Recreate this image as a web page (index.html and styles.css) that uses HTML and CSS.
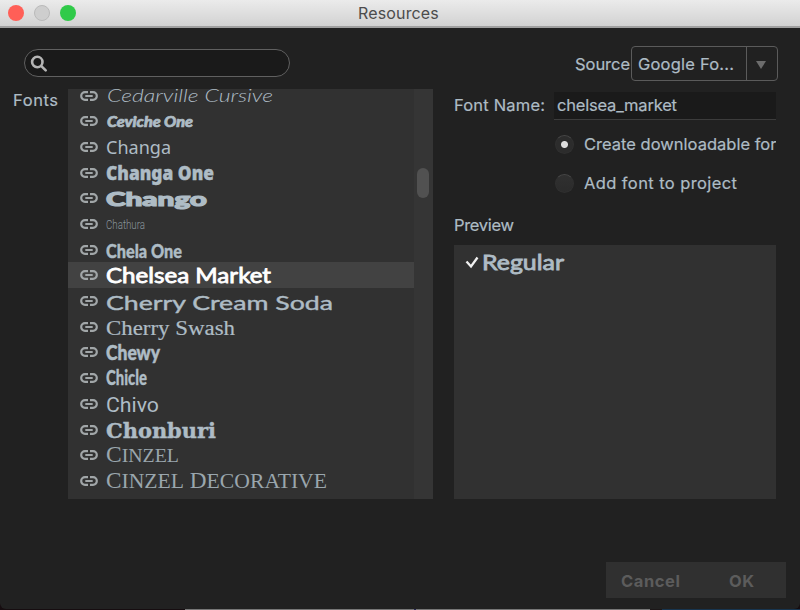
FILE: index.html
```html
<!DOCTYPE html>
<html lang="en">
<head>
<meta charset="utf-8">
<title>Resources</title>
<link rel="stylesheet" href="styles.css">
</head>
<body>
<svg class="defs" aria-hidden="true"><symbol id="link" viewBox="0 0 18 10"><path d="M8 1.2H5a3.8 3.8 0 0 0 0 7.6H8M10 1.2h3a3.8 3.8 0 0 1 0 7.6H10M5.3 5h7.4" fill="none" stroke="currentColor" stroke-width="2.2"/></symbol></svg>
<div class="window">
  <header class="titlebar"><i class="light red"></i><i class="light grey"></i><i class="light green"></i><h1>Resources</h1></header>
  <main class="content">
    <section class="browser">
      <div class="search"><svg width="18" height="18" viewBox="0 0 18 18"><circle cx="7.3" cy="7" r="5.2"/><path d="M11.1 10.8l4.6 4.6"/></svg></div>
      <div class="fonts">
        <label class="caption"><svg width="46" height="22"><text x="0" y="17" textLength="45">Fonts</text></svg></label>
        <div class="list">
          <ul class="rows">
            <li><svg class="link"><use href="#link"/></svg><svg class="name"><text class="cedar" x="1" y="19" textLength="166" lengthAdjust="spacingAndGlyphs">Cedarville Cursive</text></svg></li>
            <li><svg class="link"><use href="#link"/></svg><svg class="name"><text class="ceviche" x="1" y="18.6" textLength="86" lengthAdjust="spacingAndGlyphs">Ceviche One</text></svg></li>
            <li><svg class="link"><use href="#link"/></svg><svg class="name"><text class="changa" x="0" y="19.5" textLength="65" lengthAdjust="spacingAndGlyphs">Changa</text></svg></li>
            <li><svg class="link"><use href="#link"/></svg><svg class="name"><text class="changa-one" x="0" y="20.3" textLength="108" lengthAdjust="spacingAndGlyphs">Changa One</text></svg></li>
            <li><svg class="link"><use href="#link"/></svg><svg class="name"><text class="chango" x="0" y="20.6" textLength="101" lengthAdjust="spacingAndGlyphs">Chango</text></svg></li>
            <li><svg class="link"><use href="#link"/></svg><svg class="name"><text class="chathura" x="0" y="18.4" textLength="39" lengthAdjust="spacingAndGlyphs">Chathura</text></svg></li>
            <li><svg class="link"><use href="#link"/></svg><svg class="name"><text class="chela" x="0" y="20.6" textLength="76" lengthAdjust="spacingAndGlyphs">Chela One</text></svg></li>
            <li class="selected"><svg class="link"><use href="#link"/></svg><svg class="name"><text class="chelsea" x="0" y="20.6" textLength="165" lengthAdjust="spacingAndGlyphs">Chelsea Market</text></svg></li>
            <li><svg class="link"><use href="#link"/></svg><svg class="name"><text class="cream" x="0" y="21.6" textLength="227" lengthAdjust="spacingAndGlyphs">Cherry Cream Soda</text></svg></li>
            <li><svg class="link"><use href="#link"/></svg><svg class="name"><text class="swash" x="0" y="20.6" textLength="129" lengthAdjust="spacingAndGlyphs">Cherry Swash</text></svg></li>
            <li><svg class="link"><use href="#link"/></svg><svg class="name"><text class="chewy" x="0" y="20.6" textLength="54" lengthAdjust="spacingAndGlyphs">Chewy</text></svg></li>
            <li><svg class="link"><use href="#link"/></svg><svg class="name"><text class="chicle" x="0" y="20" textLength="41" lengthAdjust="spacingAndGlyphs">Chicle</text></svg></li>
            <li><svg class="link"><use href="#link"/></svg><svg class="name"><text class="chivo" x="0" y="20.5" textLength="53" lengthAdjust="spacingAndGlyphs">Chivo</text></svg></li>
            <li><svg class="link"><use href="#link"/></svg><svg class="name"><text class="chonburi" x="0" y="20.7" textLength="110" lengthAdjust="spacingAndGlyphs">Chonburi</text></svg></li>
            <li><svg class="link"><use href="#link"/></svg><svg class="name"><text class="cinzel" x="0" y="20" textLength="73" lengthAdjust="spacingAndGlyphs">C<tspan>inzel</tspan></text></svg></li>
            <li><svg class="link"><use href="#link"/></svg><svg class="name"><text class="cinzel deco" x="0" y="19.9" textLength="221" lengthAdjust="spacingAndGlyphs">C<tspan>inzel</tspan> D<tspan>ecorative</tspan></text></svg></li>
          </ul>
          <div class="track"><div class="thumb"></div></div>
        </div>
      </div>
    </section>
    <section class="details">
      <div class="source">
        <svg width="56" height="24"><text x="0" y="19" textLength="55">Source</text></svg>
        <div class="select"><svg width="115" height="34"><text x="6" y="23" textLength="96">Google Fo...</text></svg><span class="arrow"></span></div>
      </div>
      <div class="namefield">
        <svg width="100" height="26"><text x="0" y="19" textLength="91">Font Name:</text></svg>
        <div class="field"><svg width="200" height="26"><text x="3" y="18.5" textLength="120">chelsea_market</text></svg></div>
      </div>
      <div class="radio first"><i class="on"></i><svg width="192" height="24"><text x="0" y="18" textLength="192.5">Create downloadable for</text></svg></div>
      <div class="radio"><i></i><svg width="192" height="24"><text x="0" y="18" textLength="153">Add font to project</text></svg></div>
      <div class="previewlabel"><svg width="62" height="24"><text x="0" y="18" textLength="60">Preview</text></svg></div>
      <div class="preview"><svg class="check" width="15" height="14"><path d="M1.5 5.5l4.5 5 6.5-9"/></svg><svg width="90" height="28"><text class="regular" x="0" y="20" textLength="82" lengthAdjust="spacingAndGlyphs">Regular</text></svg></div>
    </section>
  </main>
  <footer class="actions"><div class="buttons"><svg width="180" height="36"><text x="15" y="24.5" textLength="59">Cancel</text><text x="123" y="24.5" textLength="25">OK</text></svg></div></footer>
</div>
<div class="desktop"></div>
</body>
</html>
```
FILE: styles.css
```css
* { box-sizing: border-box; }
body { margin: 0; width: 800px; height: 610px; overflow: hidden; background: #160d10; font-family: Inter, Roboto, sans-serif; font-size: 16.5px; color: #aebcc5; }
svg { display: block; flex: none; }
text { fill: #aebcc5; }
.details text, .caption text { stroke: #aebcc5; stroke-width: 0.2; }
.defs { width: 0; height: 0; float: left; }
.window { height: 609px; background: #212121; border-radius: 0 0 6px 6px; overflow: hidden; }
.titlebar { height: 28px; display: flex; align-items: center; gap: 10px; padding: 0 0 1px 8px; background: linear-gradient(#ebebeb, #d2d2d2); border-bottom: 2px solid #a0a0a0; }
.light { width: 16px; height: 16px; border-radius: 50%; flex: none; }
.red { background: #ff5f57; }
.grey { background: #cecece; border: 1px solid #bababa; }
.green { background: #30ca49; }
h1 { margin: 0 0 0 272px; font: 400 16px Inter, sans-serif; letter-spacing: 0.15px; color: #4c4c4c; }

.content { display: flex; height: 473px; padding-top: 21px; }
.browser { width: 433px; }
.search { margin-left: 24px; width: 266px; height: 28px; border: 1.5px solid #606060; border-radius: 14px; background: #1a1a1a; padding: 5px 0 0 5px; }
.search svg { fill: none; stroke: #b5b5b5; stroke-width: 2.6; stroke-linecap: round; }
.fonts { display: flex; margin-top: 12px; }
.caption { width: 68px; padding-left: 13px; }
.list { width: 365px; height: 410px; display: flex; overflow: hidden; background: #313131; }
.rows { list-style: none; margin: -6.4px 0 0; padding: 0 0 0 1px; width: 346px; }
.rows li { height: 25.7px; padding-left: 11px; display: flex; }
.rows li.selected { margin-left: -1px; padding-left: 12px; }
.link { width: 18px; height: 10px; margin-top: 8px; color: #a1a6a8; }
.name { width: 290px; height: 25.7px; margin-left: 8px; overflow: visible; }
.selected { background: #424242; }
.track { width: 19px; background: #353535; padding: 79px 0 0 3px; }
.thumb { width: 12px; height: 30px; border-radius: 6px; background: #515151; }

.cedar { font: italic 300 17px Lato; }
.ceviche { font: italic 900 15px Lato; stroke: #aebcc5; stroke-width: 0.7; }
.changa { font: 400 18px "Noto Sans"; }
.changa-one { font: 900 19px "Noto Sans"; stroke: #aebcc5; stroke-width: 0.4; }
.chango { font: 900 19.5px Lato; stroke: #aebcc5; stroke-width: 1.2; }
.chathura { font: 300 12px Roboto; fill: #89949a; }
.chela { font: 900 19px Lato; stroke: #aebcc5; stroke-width: 0.4; }
.chelsea { font: 400 20.5px Lato; fill: #fff; stroke: #fff; stroke-width: 0.8; }
.cream { font: 400 19px Lato; stroke: #aebcc5; stroke-width: 0.4; }
.swash { font: 400 20px "Liberation Serif"; stroke: #aebcc5; stroke-width: 0.2; }
.chewy { font: 900 20.5px Lato; stroke: #aebcc5; stroke-width: 0.5; }
.chicle { font: 900 20px Lato; stroke: #aebcc5; stroke-width: 0.3; }
.chivo { font: 400 20px Roboto; }
.chonburi { font: 700 20px "DejaVu Serif"; stroke: #aebcc5; stroke-width: 0.4; }
.cinzel { font: 400 22.5px "Liberation Serif"; fill: #9aa6ad; }
.cinzel tspan { font-size: 19px; text-transform: uppercase; }
.deco tspan { font-size: 21px; }

.details { width: 346px; padding-left: 21px; }
.source { display: flex; align-items: center; margin: -3px 0 0 121px; height: 34px; }
.select { width: 147px; height: 35px; display: flex; border: 1.5px solid #5b5b5b; border-radius: 4px; }
.select svg { border-right: 1.5px solid #5b5b5b; height: 33px; }
.arrow { margin: 14px 0 0 9px; width: 0; height: 0; border: 5px solid transparent; border-top: 8px solid #6c6c6c; border-bottom: 0; }
.namefield { display: flex; margin-top: 12px; height: 28px; }
.field { width: 222px; height: 28px; background: #1a1a1a; border-bottom: 1px solid #3c3c3c; }
.radio { display: flex; height: 24px; margin: 15px 0 0 101px; align-items: center; }
.radio.first { margin-top: 12px; }
.radio i { flex: none; width: 19px; height: 19px; margin-right: 10px; border-radius: 50%; background: linear-gradient(#303030, #2b2b2b); border: 1px solid #303030; border-top-color: #474747; }
.radio i.on { background: radial-gradient(circle, #dedede 0 3px, #2c2c2c 4px); }
.previewlabel { margin-top: 18px; }
.preview { width: 322px; height: 254px; margin-top: 8px; padding: 5px 0 0 11px; display: flex; background: #313131; }
.check { margin: 6px 2px 0 0; fill: none; stroke: #f0f0f0; stroke-width: 2.3; }
.details .regular { font: 400 21px Lato; stroke: #aebcc5; stroke-width: 0.8; }

.actions { display: flex; justify-content: flex-end; margin-top: 61px; padding-right: 14px; }
.buttons { width: 180px; height: 36px; background: #303030; }
.buttons text { font: 700 16.5px Inter; fill: #5c5c5c; }
.desktop { height: 1px; background: linear-gradient(90deg, #160d10 185px, #777 185px 414px, #252550 414px 416px, #777 416px 650px, #1c1718 650px 662px, #173550 662px); }
```
